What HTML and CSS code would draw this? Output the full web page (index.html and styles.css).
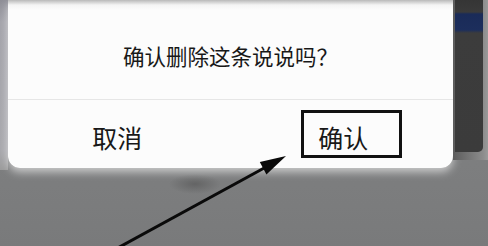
FILE: index.html
```html
<!DOCTYPE html>
<html lang="zh-CN">

<head>
    <meta charset="UTF-8">
    <meta name="viewport" content="width=device-width, initial-scale=1.0">
    <title>删除说说</title>
    <link rel="stylesheet" href="styles.css">
</head>

<body>
    <div class="screen">
        <div class="side-left"></div>

        <section class="dialog">
            <p class="dialog-title">确认删除这条说说吗？</p>
            <div class="dialog-actions">
                <button class="btn btn-cancel">取消</button>
                <button class="btn btn-ok"><span class="mark">确认</span></button>
            </div>
        </section>

        <div class="side-right">
            <div class="side-bar"></div>
        </div>
    </div>

    <!-- 指向"确认"按钮的箭头标注 -->
    <svg class="arrow" width="488" height="246" viewBox="0 0 488 246">
        <line x1="114" y1="250" x2="266" y2="167" stroke="#0a0a0a" stroke-width="3" />
        <polygon points="286,156 259.8,162 266.4,174.4" fill="#0a0a0a" />
    </svg>
</body>

</html>
```

FILE: styles.css
```css
body {
    margin: 0;
    width: 488px;
    height: 246px;
    overflow: hidden;
    background:
        radial-gradient(ellipse 26px 10px at 195px 184px, rgba(70, 70, 70, .45), transparent),
        linear-gradient(#858687, #797a7b);
    font-family: "Noto Sans CJK SC", "Noto Sans", sans-serif;
    color: #181818;
}

.screen {
    display: flex;
    align-items: flex-start;
    height: 246px;
}

.side-left {
    width: 8px;
    height: 170px;
    background: linear-gradient(#8e8e96 0, #a4a4ab 22px, #a8a8ad 150px, #9c9c9c 170px);
}

.dialog {
    width: 445px;
    height: 168px;
    border-radius: 0 0 12px 12px;
    box-shadow: 0 4px 8px rgba(255, 255, 255, .6);
    background: linear-gradient(#b9b9b9 0, #f4f4f4 5px, #fcfcfc 10px);
}

.dialog-title {
    margin: 0;
    height: 100px;
    box-sizing: border-box;
    padding-top: 41px;
    line-height: 30px;
    font-size: 21.5px;
    text-align: center;
    border-bottom: 1px solid #e6e6e6;
}

.dialog-actions {
    display: flex;
    height: 67px;
}

.btn {
    flex: 1;
    display: flex;
    align-items: center;
    justify-content: center;
    border: 0;
    background: none;
    padding: 0;
    font-family: inherit;
    font-size: 25px;
    color: #181818;
}

.btn-cancel {
    padding-right: 8px;
    padding-top: 6px;
}

.mark {
    margin-left: 16px;
    border: 3px solid #111;
    padding: 6px 31px 0 14px;
    line-height: 36px;
}

.side-right {
    flex: 1;
    height: 160px;
    display: flex;
    padding-left: 2px;
    background: linear-gradient(to right, #5c5c5c 0, #8c8c8c 30px, #9a9a9a 35px);
}

.side-bar {
    width: 28px;
    height: 152px;
    border-radius: 0 0 5px 0;
    background: linear-gradient(#353535 0, #3a3a3a 12px, #1a2b58 14px, #1c2e5c 30px, #3c3c3c 33px, #3b3b3b 152px);
}

.arrow {
    position: absolute;
    left: 0;
    top: 0;
}
```
